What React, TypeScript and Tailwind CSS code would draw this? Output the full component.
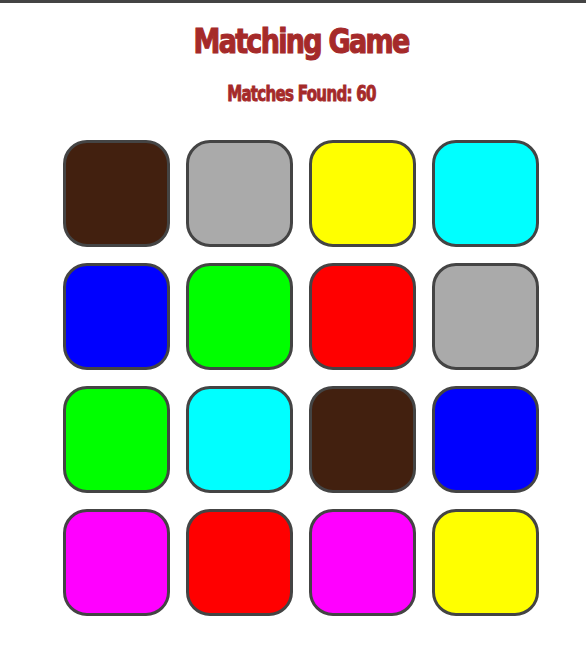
import React from "react";

const cards = [
  "bg-[#42200f]", "bg-[#aaaaaa]", "bg-[#ffff00]", "bg-[#00ffff]",
  "bg-[#0000ff]", "bg-[#00ff00]", "bg-[#ff0000]", "bg-[#aaaaaa]",
  "bg-[#00ff00]", "bg-[#00ffff]", "bg-[#42200f]", "bg-[#0000ff]",
  "bg-[#ff00ff]", "bg-[#ff0000]", "bg-[#ff00ff]", "bg-[#ffff00]",
];

export default function App() {
  return (
    <div className="min-h-[667px] bg-white border-t-[3px] border-[#444444] flex flex-col items-center pl-[16px] font-['DejaVu_Sans_Condensed','DejaVu_Sans',sans-serif]">
      <h1 className="mt-[22px] text-[30px] leading-[34px] font-bold text-[#a52a2a] tracking-[-1.7px] [-webkit-text-stroke:1px_#a52a2a] scale-y-110">
        Matching Game
      </h1>
      <p className="mt-[23px] text-[19px] leading-[22px] font-bold text-[#a52a2a] tracking-[-0.8px] [-webkit-text-stroke:0.8px_#a52a2a] scale-x-[0.88] scale-y-110">
        Matches Found: 60
      </p>
      <div className="mt-[36px] grid grid-cols-4 gap-4">
        {cards.map((c, i) => (
          <div
            key={i}
            className={`w-[107px] h-[107px] rounded-[24px] border-[3px] border-[#444444] ${c}`}
          />
        ))}
      </div>
    </div>
  );
}
